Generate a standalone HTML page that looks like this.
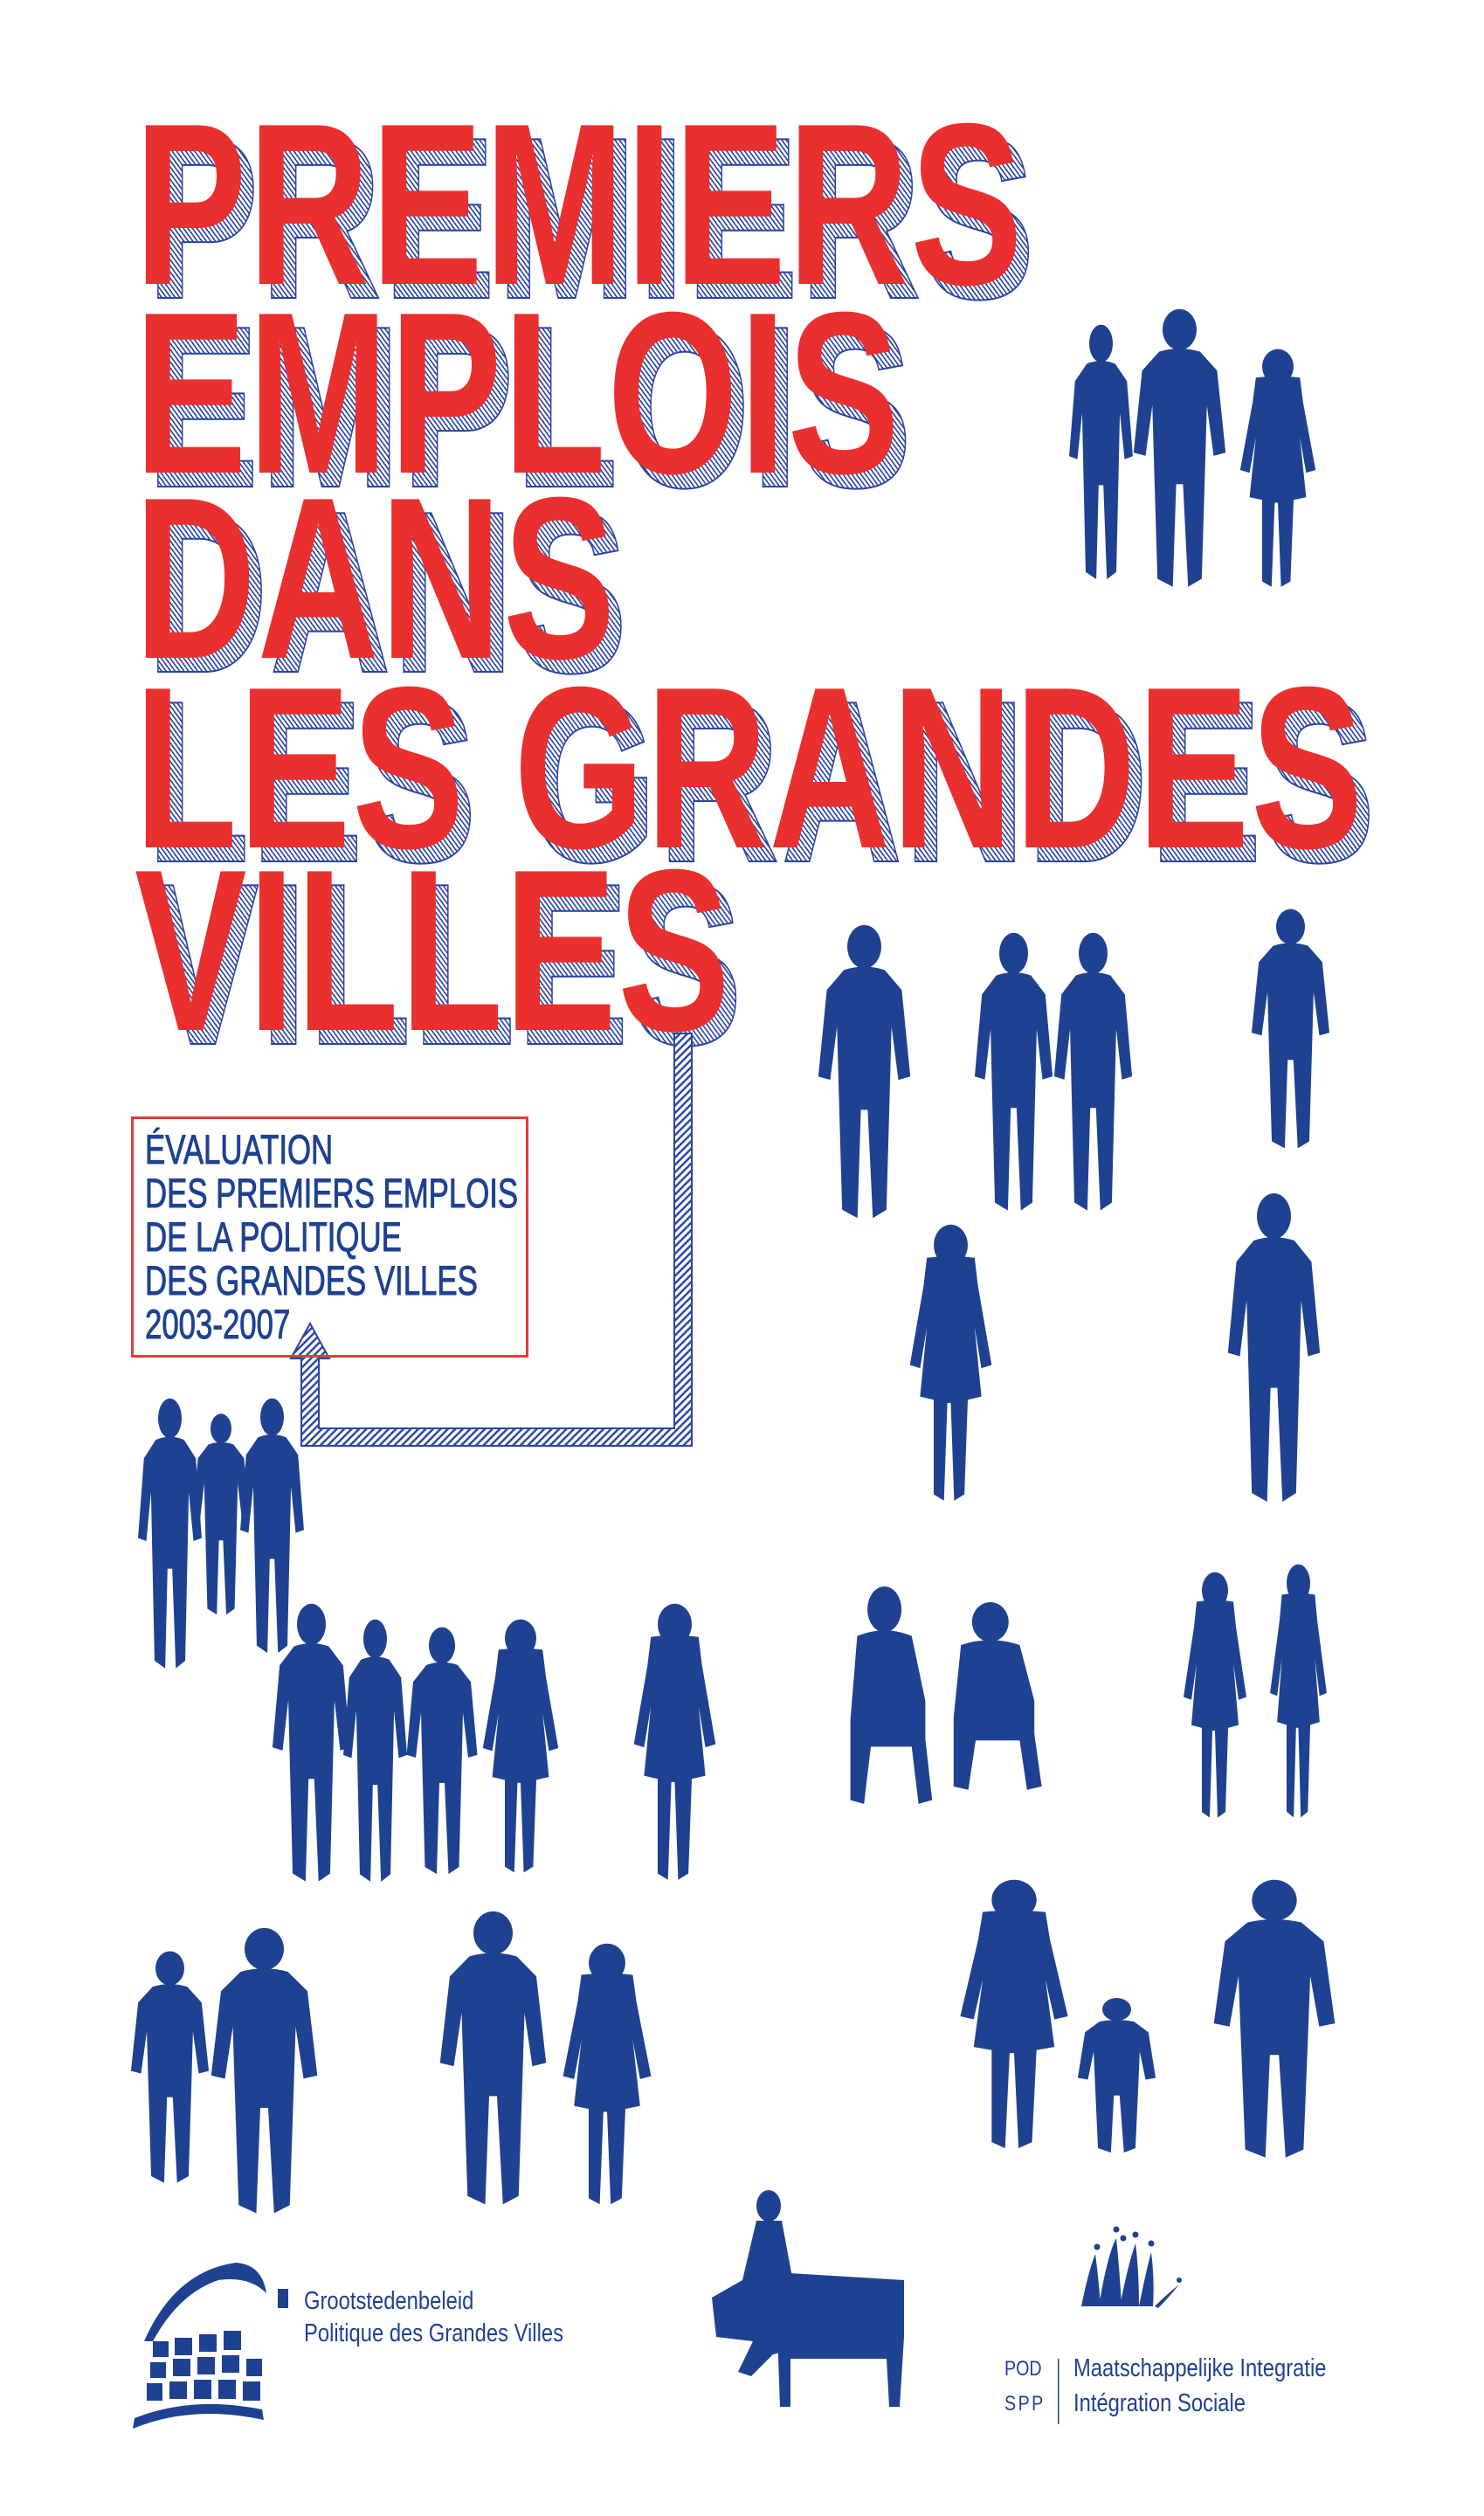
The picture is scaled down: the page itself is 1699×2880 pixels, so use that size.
<!DOCTYPE html>
<html><head><meta charset="utf-8">
<style>
html,body{margin:0;padding:0;background:#fff}
body{width:1699px;height:2880px;position:relative;overflow:hidden;font-family:"Liberation Sans",sans-serif}
.t{position:absolute;left:154px;font-weight:bold;font-size:264px;line-height:1;white-space:nowrap;transform:scaleX(.73);transform-origin:0 0;letter-spacing:2px}
.r{color:#ea302f}
.s{color:transparent;-webkit-text-stroke:2px #2c44a0;background:repeating-linear-gradient(45deg,#3048a8 0 2px,#fff 2px 5px);-webkit-background-clip:text;background-clip:text}
.box{position:absolute;left:150px;top:1278px;width:449px;height:270px;border:3px solid #e63b3b}
.bt{position:absolute;left:166px;top:1291px;font-size:47px;line-height:50px;color:#1f4191;white-space:nowrap;transform:scaleX(.74);transform-origin:0 0;-webkit-text-stroke:1px #1f4191}
.lg{position:absolute;color:#1f4191;font-size:29px;white-space:nowrap;transform:scaleX(.82);transform-origin:0 0;line-height:1}
</style></head><body>

<div class="t s" style="top:118px;left:168px">PREMIERS</div>
<div class="t r" style="top:102px">PREMIERS</div>
<div class="t s" style="top:334px;left:168px">EMPLOIS</div>
<div class="t r" style="top:318px">EMPLOIS</div>
<div class="t s" style="top:546px;left:168px">DANS</div>
<div class="t r" style="top:530px">DANS</div>
<div class="t s" style="top:763px;left:168px">LES GRANDES</div>
<div class="t r" style="top:747px">LES GRANDES</div>
<div class="t s" style="top:972px;left:168px">VILLES</div>
<div class="t r" style="top:956px">VILLES</div>

<svg width="1699" height="2880" style="position:absolute;left:0;top:0">
<defs>
<pattern id="hp" width="6" height="6" patternUnits="userSpaceOnUse" patternTransform="rotate(45)"><rect width="6" height="6" fill="#fff"/><rect width="2.5" height="6" fill="#3048a8"/></pattern>
<symbol id="p" viewBox="0 0 60 180" preserveAspectRatio="none">
<ellipse cx="30" cy="14" rx="10" ry="13"/>
<path d="M18 28 Q30 24 42 28 L52 40 L57 92 L50 94 L46 62 L45 100 L43 172 L35 177 L32 112 L28 112 L26 177 L17 172 L15 100 L14 62 L10 94 L3 92 L8 40 Z"/>
</symbol>
<symbol id="w" viewBox="0 0 60 180" preserveAspectRatio="none">
<ellipse cx="30" cy="14" rx="10" ry="13"/>
<path d="M16 22 Q30 20 44 22 L46 40 L54 90 L48 92 L44 66 L48 110 L40 112 L38 172 L32 176 L30 114 L28 114 L26 176 L20 172 L20 112 L12 110 L16 66 L12 92 L6 90 L14 40 Z"/>
</symbol>
<symbol id="sit" viewBox="0 0 60 120" preserveAspectRatio="none">
<ellipse cx="28" cy="12" rx="10" ry="12"/>
<path d="M12 26 Q28 20 44 26 L52 60 L52 80 L56 112 L48 114 L44 84 L20 84 L16 114 L8 112 L8 70 Z"/>
</symbol>
</defs>
<g fill="#1f4191">
<path d="M772 1183 h20 v472 h-447 v-100 h-12 l22 -40 l22 40 h-12 v80 h407 v-452z" fill="url(#hp)" stroke="#2c44a0" stroke-width="2"/>
<use href="#p" x="1220" y="370" width="81" height="298"/>
<use href="#p" x="1292" y="352" width="117" height="325"/>
<use href="#w" x="1409" y="398" width="108" height="280"/>
<use href="#p" x="931" y="1057" width="117" height="343"/>
<use href="#p" x="1111" y="1066" width="99" height="325"/>
<use href="#p" x="1202" y="1066" width="99" height="325"/>
<use href="#p" x="1428" y="1039" width="99" height="280"/>
<use href="#w" x="1030" y="1400" width="117" height="325"/>
<use href="#p" x="1400" y="1364" width="117" height="361"/>
<use href="#p" x="154" y="1599" width="81" height="316"/>
<use href="#p" x="217" y="1617" width="72" height="235"/>
<use href="#p" x="271" y="1599" width="81" height="298"/>
<use href="#p" x="307" y="1834" width="99" height="325"/>
<use href="#p" x="389" y="1852" width="81" height="307"/>
<use href="#p" x="461" y="1861" width="90" height="289"/>
<use href="#w" x="542" y="1852" width="108" height="298"/>
<use href="#w" x="714" y="1834" width="117" height="325"/>
<use href="#sit" x="958" y="1816" width="117" height="262"/>
<use href="#sit" x="1075" y="1834" width="126" height="226"/>
<use href="#w" x="1346" y="1798" width="90" height="289"/>
<use href="#w" x="1446" y="1789" width="81" height="298"/>
<use href="#p" x="145" y="2232" width="99" height="271"/>
<use href="#p" x="235" y="2205" width="135" height="334"/>
<use href="#p" x="497" y="2186" width="135" height="343"/>
<use href="#w" x="632" y="2223" width="126" height="307"/>
<use href="#w" x="1084" y="2150" width="154" height="316"/>
<use href="#p" x="1229" y="2286" width="99" height="181"/>
<use href="#p" x="1382" y="2150" width="154" height="325"/>
<g transform="translate(0,30)">
<path d="M870 2570 L1035 2580 L1035 2645 L1030 2725 L1018 2725 L1015 2670 L905 2670 L905 2725 L893 2725 L890 2640 Z"/>
<ellipse cx="880" cy="2495" rx="14" ry="18"/>
<path d="M866 2512 L895 2512 L915 2620 L905 2660 L885 2665 L860 2690 L845 2685 L862 2650 L820 2645 L815 2600 L850 2580 Z"/>
</g>
<path d="M165 2680 Q200 2600 270 2590 Q300 2592 305 2625 Q285 2605 250 2610 Q205 2625 175 2680 Z"/>
<rect x="318" y="2620" width="12" height="22"/>
<g>
<rect x="175" y="2680" width="18" height="18"/><rect x="200" y="2676" width="20" height="20"/><rect x="228" y="2672" width="20" height="20"/><rect x="256" y="2668" width="20" height="22"/>
<rect x="172" y="2704" width="18" height="18"/><rect x="198" y="2700" width="20" height="20"/><rect x="226" y="2698" width="20" height="20"/><rect x="254" y="2696" width="20" height="20"/><rect x="282" y="2700" width="18" height="20"/>
<rect x="168" y="2728" width="18" height="20"/><rect x="194" y="2726" width="20" height="20"/><rect x="222" y="2724" width="20" height="22"/><rect x="250" y="2724" width="20" height="22"/><rect x="278" y="2726" width="20" height="22"/>
<path d="M152 2780 Q220 2752 302 2770 L300 2758 Q220 2742 154 2768 Z"/>
</g>
<g transform="translate(1238,2560)">
<path d="M0 80 Q8 40 16 20 Q20 50 22 80 Z M20 80 Q30 20 40 2 Q44 40 46 80 Z M44 80 Q54 30 62 8 Q66 40 66 80 Z M66 80 Q74 40 80 18 Q84 50 82 80 Z M84 80 Q98 66 112 55 Q100 70 88 82 Z"/>
<circle cx="18" cy="12" r="3.5"/><circle cx="40" cy="-8" r="3.5"/><circle cx="48" cy="2" r="3.5"/><circle cx="62" cy="-2" r="3.5"/><circle cx="80" cy="8" r="3.5"/><circle cx="112" cy="50" r="3"/>
</g>
<rect x="1211" y="2700" width="1.5" height="75"/>
</g>
</svg>

<div class="box"></div>
<div class="bt">ÉVALUATION<br>DES PREMIERS EMPLOIS<br>DE LA POLITIQUE<br>DES GRANDES VILLES<br>2003-2007</div>

<div class="lg" style="left:348px;top:2620px">Grootstedenbeleid</div>
<div class="lg" style="left:348px;top:2657px">Politique des Grandes Villes</div>
<div class="lg" style="left:1150px;top:2700px;font-size:24px">POD</div>
<div class="lg" style="left:1150px;top:2740px;font-size:24px;letter-spacing:3px">SPP</div>
<div class="lg" style="left:1229px;top:2697px">Maatschappelijke Integratie</div>
<div class="lg" style="left:1229px;top:2737px">Intégration Sociale</div>
</body></html>
